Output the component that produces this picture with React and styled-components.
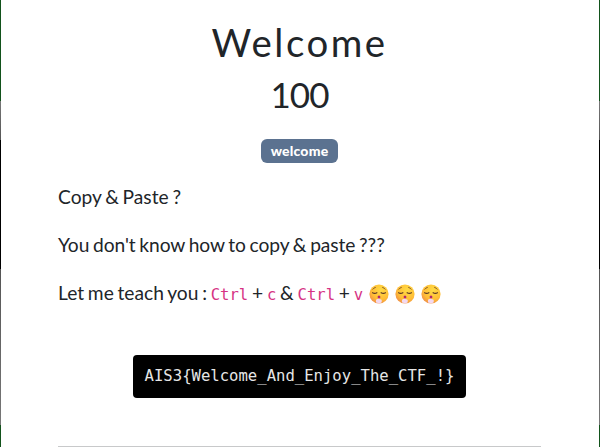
import React from 'react';
import styled, { createGlobalStyle } from 'styled-components';

const GlobalStyle = createGlobalStyle`
  * { box-sizing: border-box; }
  body { margin: 0; overflow: hidden; }
`;

const Backdrop = styled.div`
  height: 447px;
  padding: 0 1px;
  background: linear-gradient(#12521b 0 101px, #777 101px, #555 140px, #000 140px 269px, #555 269px, #777 425px, #12521b 425px);
`;

const Modal = styled.main`
  display: flex;
  flex-direction: column;
  height: 447px;
  padding: 18px 58px 0 57px;
  background: #fff;
  color: #212529;
  font-family: Lato, sans-serif;
  font-size: 20px;
`;

const Title = styled.h2`
  margin: 0;
  text-align: center;
  font-size: 38.4px;
  font-weight: 400;
  line-height: 48px;
  letter-spacing: 2.5px;
`;

const Score = styled.h3`
  margin: 4px 0 0;
  text-align: center;
  font-size: 35px;
  font-weight: 400;
  line-height: 48px;
  letter-spacing: -1px;
`;

const Tag = styled.span`
  align-self: center;
  width: 77px;
  height: 24px;
  margin-top: 21px;
  border-radius: 6px;
  background: #5b7290;
  color: #fff;
  text-align: center;
  font: 900 14px/24px Lato, sans-serif;
  letter-spacing: 0.2px;
`;

const Description = styled.div`
  display: flex;
  flex-direction: column;
  gap: 18px;
  margin-top: 19px;
`;

const Paragraph = styled.p`
  margin: 0;
  height: 30px;
  font-size: 19.2px;
  line-height: 30px;
  white-space: nowrap;
  word-spacing: -1.15px;
  letter-spacing: ${({ $tight }) => ($tight ? '-0.06px' : '0')};
`;

const Key = styled.code`
  color: #d63384;
  font: 15.6px/20px "DejaVu Sans Mono", monospace;
`;

const Faces = styled.span`
  margin-left: 1.7px;
`;

const FaceIcon = styled.svg`
  width: 20px;
  height: 20px;
  margin-right: 6.4px;
  vertical-align: -3.5px;
`;

const Flag = styled.code`
  align-self: center;
  flex-shrink: 0;
  width: 333px;
  height: 43px;
  margin-top: 47px;
  border-radius: 4px;
  background: #000;
  color: #e6e6e6;
  text-align: center;
  font: 15.6px/42px "DejaVu Sans Mono", monospace;
`;

const Divider = styled.hr`
  width: 100%;
  height: 1px;
  margin: 48px 0 0;
  border: 0;
  background: #c8c9ca;
`;

function ExhalingFace() {
  return (
    <FaceIcon viewBox="0 0 20 20" aria-label="Exhaling face">
      <defs>
        <radialGradient id="skin" cx=".6" cy=".3" r=".75">
          <stop offset="0" stopColor="#ffdb45" />
          <stop offset=".65" stopColor="#ffbd35" />
          <stop offset="1" stopColor="#ee8a48" />
        </radialGradient>
      </defs>
      <circle cx="10" cy="10" r="9.6" fill="url(#skin)" />
      <g fill="none" stroke="#593725" strokeLinecap="round">
        <path strokeWidth=".7" d="M3.8 5.2 Q4.8 3.7 6.4 3.4M13.6 3.4 Q15.2 3.7 16.2 5.2" />
        <path strokeWidth="1.1" d="M3.6 8.7 Q5.6 10 7.9 8.7M12.1 8.7 Q14.4 10 16.4 8.7" />
      </g>
      <ellipse cx="10" cy="13" rx="1.4" ry="1.5" fill="#b0266e" />
      <path d="M9.4 14.8c.6-.7 1.2-.5 1.4.4 1.4-.3 2.4.8 1.9 1.8.3 1.2-.5 2-1.6 1.9-1 .8-2.2.6-2.7-.1-1.1.1-1.9-.9-1.4-1.9-.3-1.3.8-2.2 2.1-1.8Z" fill="#f3d9f1" />
    </FaceIcon>
  );
}

export default function App() {
  return (
    <>
      <GlobalStyle />
      <Backdrop>
        <Modal>
          <Title>Welcome</Title>
          <Score>100</Score>
          <Tag>welcome</Tag>
          <Description>
            <Paragraph>Copy &amp; Paste ?</Paragraph>
            <Paragraph $tight>You don't know how to copy &amp; paste ???</Paragraph>
            <Paragraph>
              Let me teach you : <Key>Ctrl</Key> + <Key>c</Key> &amp; <Key>Ctrl</Key> + <Key>v</Key>{' '}
              <Faces><ExhalingFace /><ExhalingFace /><ExhalingFace /></Faces>
            </Paragraph>
          </Description>
          <Flag>{'AIS3{Welcome_And_Enjoy_The_CTF_!}'}</Flag>
          <Divider />
        </Modal>
      </Backdrop>
    </>
  );
}
